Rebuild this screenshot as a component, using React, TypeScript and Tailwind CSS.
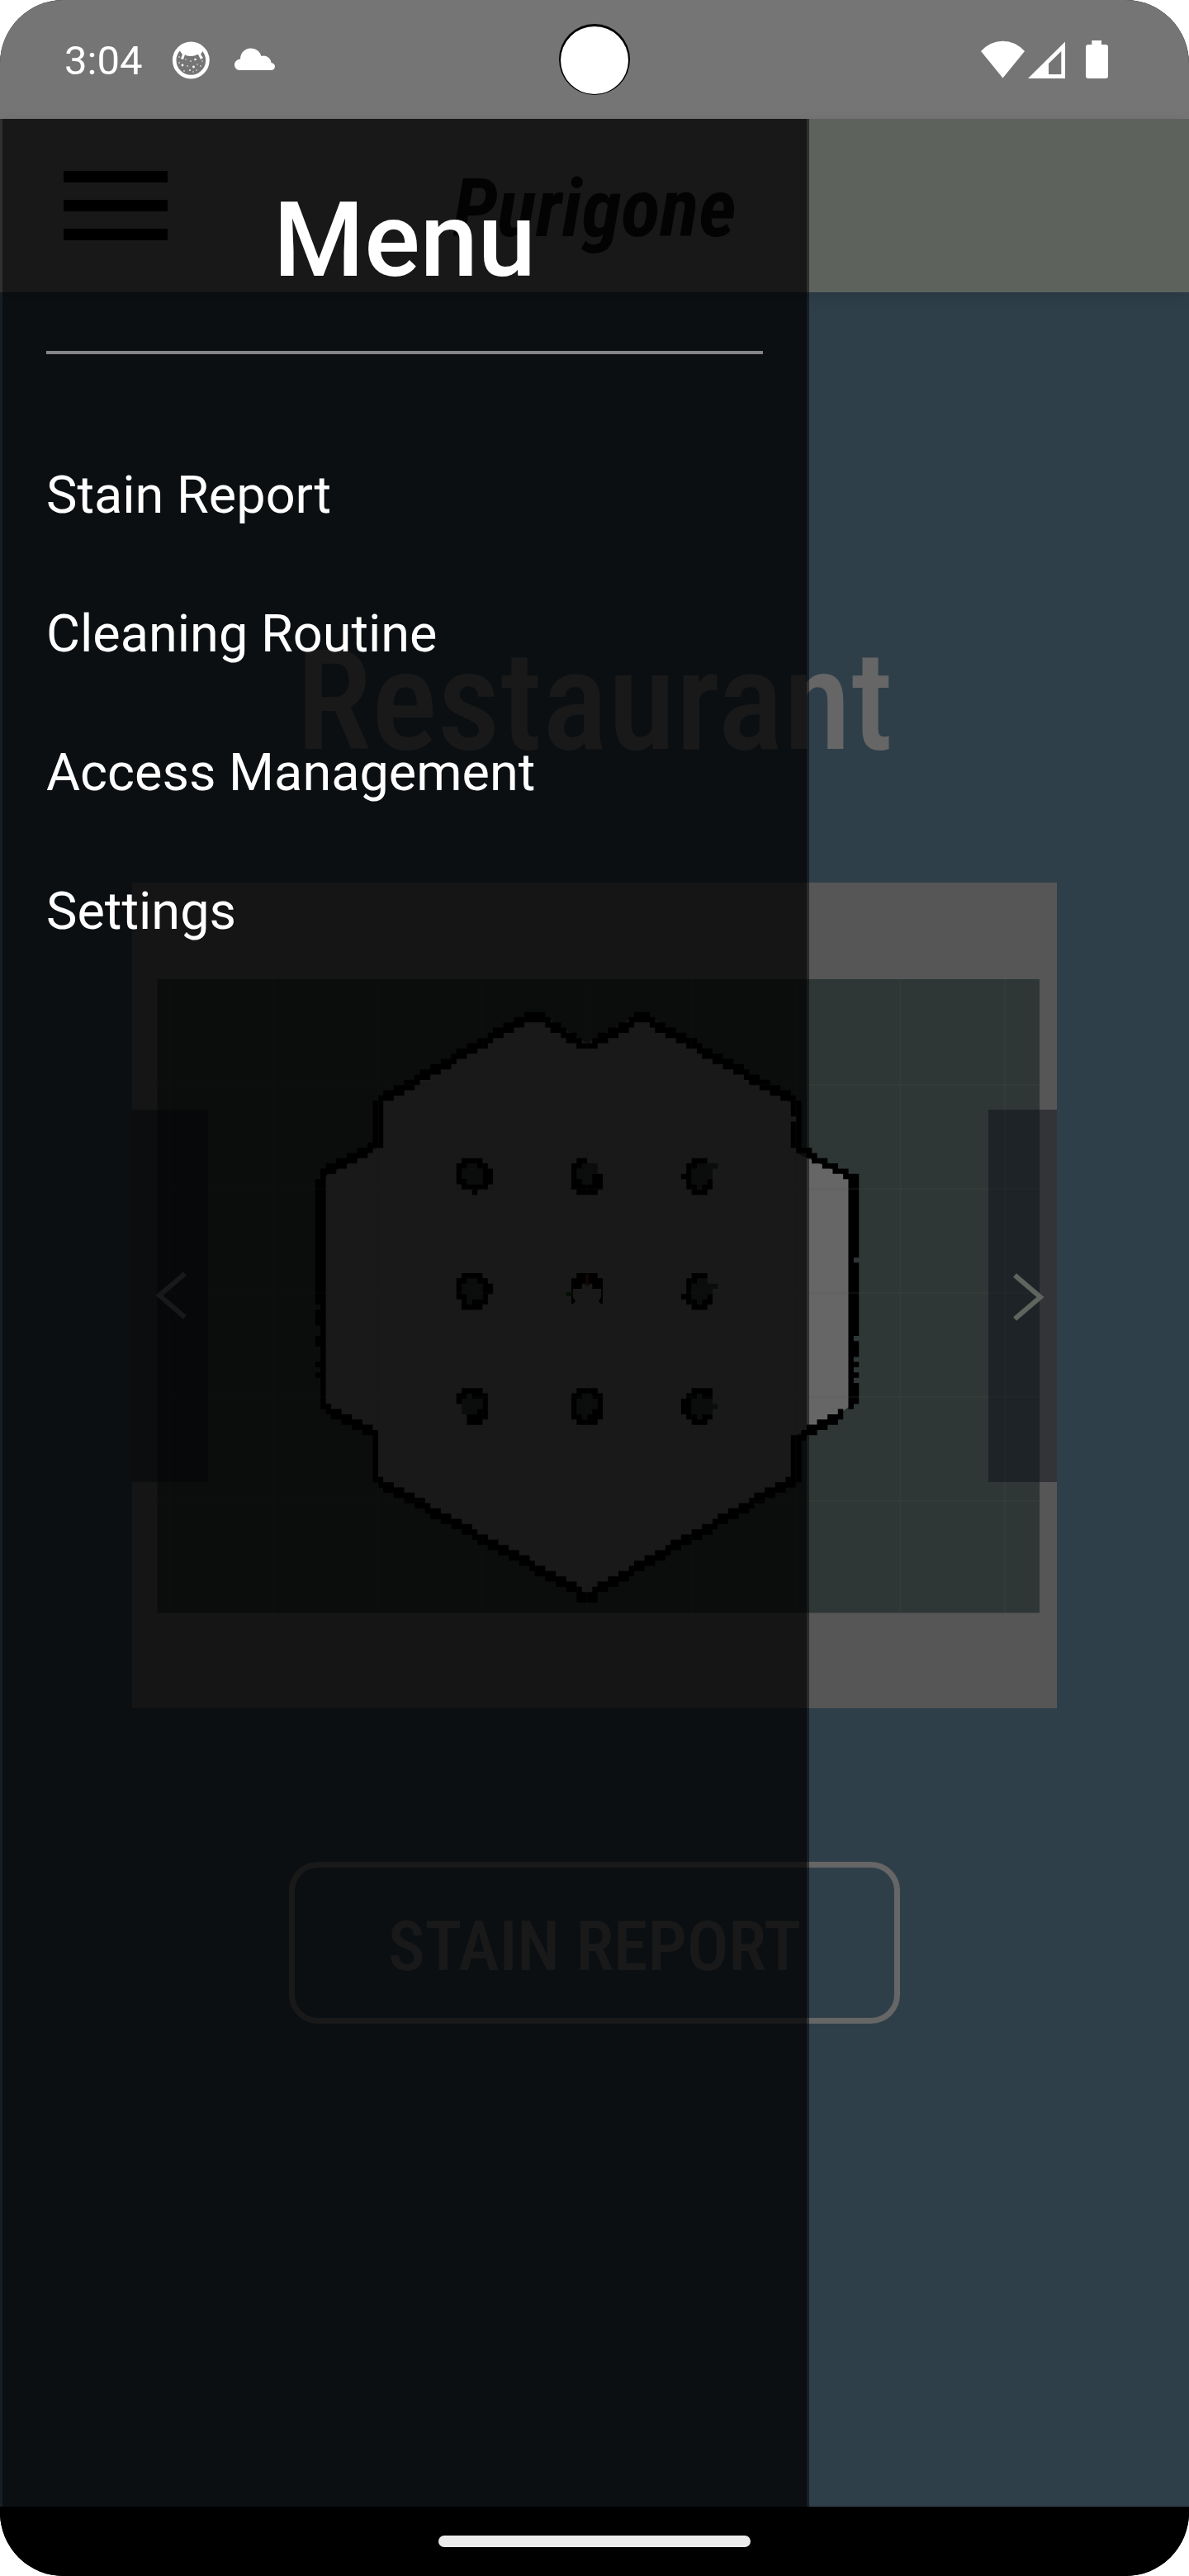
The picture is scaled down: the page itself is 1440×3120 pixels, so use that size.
type Cell = [number, number];

const CELL = 6.33;

// Adds a two-cell-high stroke, one column at a time.
function slope(cells: Cell[], x0: number, y0: number, x1: number, y1: number, thick = 2) {
  const steps = Math.abs(x1 - x0);
  for (let i = 0; i <= steps; i++) {
    const t = steps === 0 ? 0 : i / steps;
    const x = x0 + Math.sign(x1 - x0) * i;
    const y = Math.round(y0 + (y1 - y0) * t);
    for (let k = 0; k < thick; k++) cells.push([x, y + k]);
  }
}

function column(cells: Cell[], x: number, y0: number, y1: number, gaps: number[] = []) {
  for (let y = y0; y <= y1; y++) if (!gaps.includes(y)) cells.push([x, y]);
}

const outline: Cell[] = [];
slope(outline, 12, 16, 40, 0);
slope(outline, 40, 0, 43, 0);
slope(outline, 44, 1, 50, 5);
slope(outline, 51, 6, 52, 6, 1);
slope(outline, 53, 5, 60, 1);
slope(outline, 61, 0, 63, 0);
slope(outline, 64, 1, 91, 16);
column(outline, 91, 17, 25, [20]);
column(outline, 92, 17, 26);
slope(outline, 93, 26, 94, 26, 1);
slope(outline, 94, 27, 101, 31, 1);
slope(outline, 95, 27, 101, 30, 1);
column(outline, 102, 31, 75);
column(outline, 103, 31, 74, [47, 62, 66, 68, 70]);
slope(outline, 100, 76, 93, 80);
column(outline, 91, 81, 90);
column(outline, 92, 81, 89);
slope(outline, 90, 89, 53, 110);
slope(outline, 50, 111, 53, 111);
slope(outline, 50, 110, 12, 89);
column(outline, 11, 80, 89);
slope(outline, 2, 75, 11, 80);
column(outline, 1, 31, 75);
column(outline, 0, 32, 69, [56, 60, 61, 64, 65, 66, 68]);
slope(outline, 1, 30, 10, 25);
column(outline, 11, 17, 25);
column(outline, 12, 16, 25);

const dots: { x: number; y: number; rows: string[] }[] = [
  { x: 27, y: 28, rows: [".BBBB..", "BBggBB.", "BggggBB", "BggggBB", "BBgggBB", ".BBBBB.", "...B..."] },
  { x: 49, y: 28, rows: [".BB...", "BBggg.", "Bgggg.", "BgggBB", "BBggBB", "BBBBBB", ".BBBB."] },
  { x: 70, y: 28, rows: ["..BBB..", ".BBgggg", ".Bgggg.", "BBgggg.", ".BgggB.", ".BBgBB.", "..BBB.."] },
  { x: 27, y: 50, rows: [".BBBB..", "BBggBB.", "BggggBB", "BggggBB", "BBgggB.", ".BgBBB.", ".BBBB.."] },
  { x: 49, y: 50, rows: [".BBBB.", "BBBBBB", "BB..BB"] },
  { x: 70, y: 50, rows: ["..BBB..", ".BBgg..", ".Bggggg", ".Bgggg.", "BBgggB.", ".BBgBB.", "..BBB.."] },
  { x: 27, y: 72, rows: [".BBBB..", "BBgBBB.", "BggggB.", ".ggggB.", ".gggBB.", "..BBBB.", "..BBB.."] },
  { x: 49, y: 72, rows: [".BBBB.", "BBggBB", "BggggB", "BggggB", "BgggBB", "BBgBBB", ".BBBB."] },
  { x: 70, y: 72, rows: ["..BBBB.", ".BBgBB.", "BBgggg.", "BBggggg", "BBgggg.", ".BBgBB.", "..BBB.."] },
];

const holes: Cell[] = [];
for (const dot of dots) {
  dot.rows.forEach((row, r) => {
    row.split("").forEach((c, i) => {
      if (c === "B") outline.push([dot.x + i, dot.y + r]);
      if (c === "g") holes.push([dot.x + i, dot.y + r]);
    });
  });
}

const toPath = (cells: Cell[]) => cells.map(([x, y]) => `M${x} ${y}h1.02v1.02h-1.02z`).join("");

function FloorMap() {
  return (
    <svg className="mt-[117px] ml-[30px] block h-[768px] w-[1069px]" viewBox="0 0 1069 768">
      <rect x="0.5" width="1068.5" height="767.5" fill="#2e3735" />
      <g transform={`translate(191.8 39.5) scale(${CELL})`}>
        <polygon
          fill="#666666"
          points="1,32 12,26 12,17 41,1 44,1 52,6 61,1 64,1 92,18 92,27 103,32 103,75 100,77 92,81 92,90 52,111.5 11.5,89.5 11.5,81 1.5,76"
        />
        <path d={toPath(holes)} fill="#2e3735" />
        <path d={toPath(outline)} fill="#000000" />
        <path d="M49 53h.3v1.600l.5.8-.5.5H49zM55 53h-.3v1.600l-.5.8.5.5H55z" fill="#000000" />
        <path d="M51.700 50.200h.7v2.200h-.7z" fill="#4a1010" />
        <path d="M48 53.600h1.200v.8h-1.200z" fill="#103a10" />
      </g>
      <g stroke="#4c504e" strokeOpacity="0.16" strokeWidth="2.5">
        {[15, 141.5, 268, 394.5, 521, 647.5, 774, 900.5, 1027].map((x) => (
          <line key={x} x1={x} x2={x} y1="0" y2="768" />
        ))}
        {[128, 254, 380, 506, 632].map((y) => (
          <line key={y} x1="0" x2="1069" y1={y} y2={y} />
        ))}
      </g>
    </svg>
  );
}

function Chevron({ flip = false }: { flip?: boolean }) {
  return (
    <svg
      className={flip ? "h-[60px] w-[40px] rotate-180" : "h-[60px] w-[40px]"}
      viewBox="0 0 40 60"
      fill="none"
      stroke="#5f645f"
      strokeWidth="6"
    >
      <path d="M3 4.500 34 31 3 57.500" />
    </svg>
  );
}

function StatusBar() {
  return (
    <div className="relative flex h-[144px] items-center bg-[#757575] text-white">
      <div className="w-[208px] pt-[4px] pl-[78px] text-[49px] leading-[58px]">3:04</div>
      <svg className="mt-[2px] h-[46px] w-[46px]" viewBox="0 0 46 46" fill="white">
        <circle cx="23.3" cy="23" r="20.1" fill="none" stroke="white" strokeWidth="4.6" />
        <path d="M8 9 11 5C17 1 29 1 36 5L39 9 35 16 38 20 35 22 32 16Q30 16 29 17 23 19 17 17L16 16 14 22 11 21 13 16Z" />
        <circle cx="13" cy="29" r="1.4" />
        <circle cx="28.5" cy="22" r="1.3" />
        <circle cx="26.5" cy="31" r="1.4" />
        <circle cx="19" cy="30" r="0.8" />
        <circle cx="23" cy="24" r="0.8" />
        <circle cx="31" cy="28" r="0.7" />
        <circle cx="35" cy="30" r="0.8" />
        <circle cx="9" cy="26" r="0.8" />
        <circle cx="9" cy="19" r="0.8" />
        <circle cx="15" cy="36" r="0.8" />
        <circle cx="22" cy="35" r="0.9" />
        <circle cx="26" cy="37" r="0.7" />
        <circle cx="30" cy="35" r="0.7" />
        <circle cx="37" cy="24" r="0.7" />
        <circle cx="17" cy="22" r="0.7" />
      </svg>
      <svg className="ml-[30px] h-[28px] w-[50px]" viewBox="0 0 50 28" fill="white">
        <path d="M6 27C2.500 27 0 24 0 20.500 0 16.500 3 14 7 13.500 7 6 12.500 0.500 19.500 0.500 26 0.500 31 4.500 32.500 10 38 8 44 12 44.500 18 47 18.200 49 20 49 22.500 49 25 47 27 44.500 27Z" />
      </svg>
      <div className="flex flex-1 items-center justify-end pr-[97px]">
        <svg className="h-[48px] w-[155px]" viewBox="0 0 155 48" fill="white">
          <path d="M0 14Q11.500 1.800 26.500 1.800 41.500 1.800 53 14L26.500 46.500Z" />
          <path fillRule="evenodd" d="M57 47 102 2.500V47ZM82 29V42H97.300V14Z" />
          <path d="M134.300 1H146V6H151Q154 6 154 9V44Q154 47 151 47H130Q127 47 127 44V9Q127 6 130 6H134.300Z" />
        </svg>
      </div>
      <div className="absolute top-[29px] left-[677px] h-[86px] w-[86px] rounded-full bg-black">
        <div className="mt-[3px] ml-[2px] h-[82px] w-[82px] rounded-full bg-white" />
      </div>
    </div>
  );
}

function Header() {
  return (
    <header className="relative z-10 grid h-[210px] grid-cols-3 items-center bg-[#5d625d] shadow-[0_6px_16px_rgba(0,0,0,0.13)]">
      <div className="flex flex-col gap-[21px] pl-[77px]">
        <span className="h-[14px] w-[126px] bg-black" />
        <span className="h-[14px] w-[126px] bg-black" />
        <span className="h-[14px] w-[126px] bg-black" />
      </div>
      <div className="pt-[8px] text-center text-[98px] leading-[116px] font-bold text-[#0c0c12] italic [font-stretch:75%]">
        Purigone
      </div>
    </header>
  );
}

function Carousel() {
  return (
    <div className="relative mt-[121px] h-[1000px] w-[1120px] overflow-hidden bg-[#565656]">
      <FloorMap />
      <button className="absolute top-[275px] left-0 flex h-[451px] w-[92px] items-center bg-[rgba(9,11,20,0.45)] pl-[27px]">
        <Chevron flip />
      </button>
      <button className="absolute top-[275px] right-0 flex h-[451px] w-[83px] items-center bg-[rgba(9,11,20,0.45)] pl-[29px]">
        <Chevron />
      </button>
    </div>
  );
}

const menuItems = ["Stain Report", "Cleaning Routine", "Access Management", "Settings"];

function Drawer() {
  return (
    <aside className="absolute inset-y-0 left-0 z-20 w-[980px] border-x-[3px] border-black/50 bg-black/75 bg-clip-padding px-[53px] pt-[73px] text-white">
      <h2 className="text-center text-[126px] leading-[148px] font-medium">Menu</h2>
      <div className="mt-[60px] h-[4px] bg-[#868688]" />
      <nav className="mt-[87px] flex flex-col">
        {menuItems.map((item) => (
          <a key={item} className="flex h-[168px] items-center text-[63px] leading-[74px]">
            {item}
          </a>
        ))}
      </nav>
    </aside>
  );
}

export default function App() {
  return (
    <div className="h-[3120px] w-[1440px] bg-white font-['Roboto',sans-serif]">
      <div className="flex h-full flex-col overflow-hidden rounded-[77px] bg-black">
        <StatusBar />
        <div className="relative flex-1 bg-[#2f3f4a]">
          <Header />
          <main className="flex flex-col items-center pt-[397px]">
            <h1 className="text-[168px] leading-[197px] font-medium text-[#666666] [font-stretch:75%]">Restaurant</h1>
            <Carousel />
            <button className="mt-[186px] flex h-[196px] w-[740px] items-center justify-center rounded-[35px] border-[7px] border-[#666666] pt-[9px] text-[84px] leading-[98px] font-medium text-[#666666] [font-stretch:75%]">
              STAIN REPORT
            </button>
          </main>
          <Drawer />
        </div>
        <div className="flex h-[84px] items-center justify-center bg-black">
          <div className="h-[14px] w-[378px] rounded-full bg-[#ebebeb]" />
        </div>
      </div>
    </div>
  );
}
